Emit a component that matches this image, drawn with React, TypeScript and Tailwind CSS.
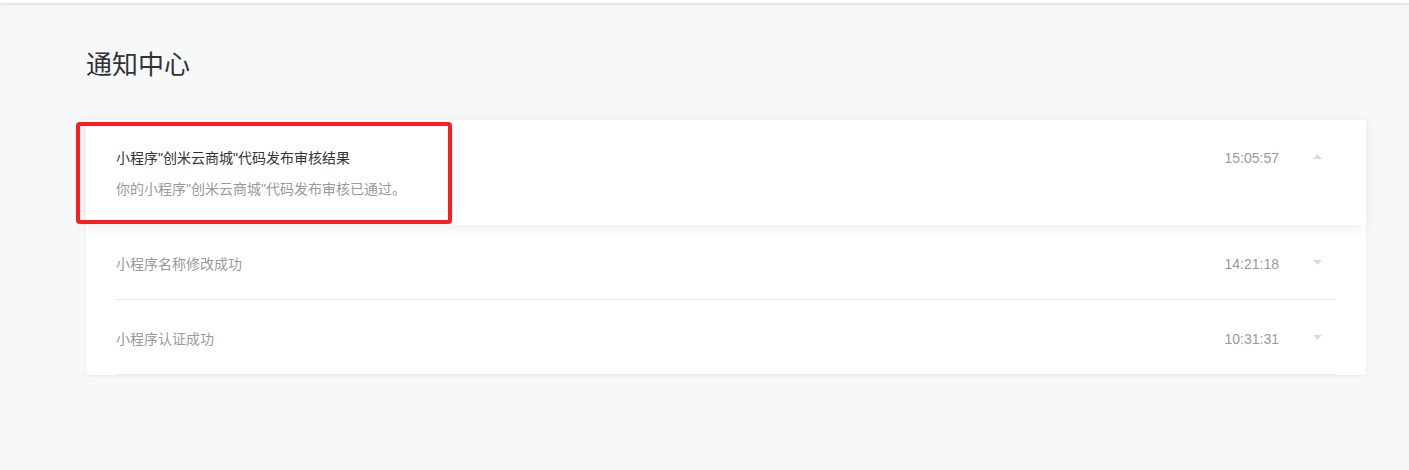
import React from 'react';

interface Notice {
  title: string;
  time: string;
  content?: string;
  open?: boolean;
}

const notices: Notice[] = [
  {
    title: '小程序"创米云商城"代码发布审核结果',
    time: '15:05:57',
    content: '你的小程序"创米云商城"代码发布审核已通过。',
    open: true,
  },
  { title: '小程序名称修改成功', time: '14:21:18' },
  { title: '小程序认证成功', time: '10:31:31' },
];

const Caret: React.FC<{ up?: boolean }> = ({ up }) => (
  <svg width="9" height="5" viewBox="0 0 9 5" className="block">
    {up ? <path d="M0 5 L4.5 0 L9 5 Z" fill="#dcdcdc" /> : <path d="M0 0 L9 0 L4.5 5 Z" fill="#dcdcdc" />}
  </svg>
);

const App: React.FC = () => {
  const first = notices[0];
  const rest = notices.slice(1);

  return (
    <div
      className="min-h-[470px] bg-[#f7f8fa]"
      style={{ fontFamily: '"Liberation Sans", "Noto Sans CJK SC", sans-serif' }}
    >
      {/* top bar edge */}
      <div className="h-[4px] bg-white shadow-[0_1px_2px_rgba(0,0,0,0.08)] border-b border-[#e6e6e6]" />

      <div className="pl-[86px] pr-[43px] pt-[44px] pb-[95px]">
        <h1 className="text-[26px] leading-[34px] text-[#333] mb-[38px]">通知中心</h1>

        {/* expanded item */}
        <div className="relative bg-white shadow-[0_2px_12px_rgba(0,0,0,0.08)] pt-[28px] px-[30px] pb-[26px]">
          <div className="flex items-center h-[20px]">
            <span className="flex-1 text-[14px] text-[#333]">{first.title}</span>
            <span className="text-[14px] text-[#999] mr-[34px]">{first.time}</span>
            <span className="mr-[14px] -mt-[3px]">
              <Caret up />
            </span>
          </div>
          <p className="mt-[11px] h-[20px] leading-[20px] text-[14px] text-[#999]">{first.content}</p>

          {/* annotation box */}
          <div className="absolute left-[-10px] top-[2px] w-[376px] h-[102px] border-[4px] border-[#fe1c1c] rounded-[4px]" />
        </div>

        {/* collapsed items */}
        <div className="bg-white rounded-b-[4px] shadow-[0_1px_3px_rgba(0,0,0,0.06)]">
          {rest.map((n) => (
            <div key={n.time} className="mx-[30px] border-b border-[#e8e8e8] pt-[29px] pb-[25px]">
              <div className="flex items-center h-[20px]">
                <span className="flex-1 text-[14px] text-[#999]">{n.title}</span>
                <span className="text-[14px] text-[#999] mr-[34px]">{n.time}</span>
                <span className="mr-[14px] -mt-[4px]">
                  <Caret />
                </span>
              </div>
            </div>
          ))}
        </div>
      </div>
    </div>
  );
};

export default App;
